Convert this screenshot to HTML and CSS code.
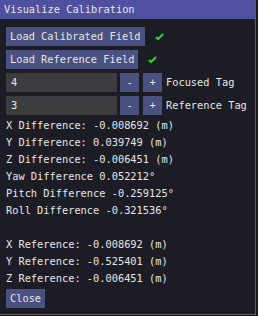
FILE: index.html
```html
<!DOCTYPE html>
<html lang="en">
<head>
    <meta charset="UTF-8">
    <meta name="viewport" content="width=device-width, initial-scale=1.0">
    <title>Visualize Calibration</title>
    <link rel="stylesheet" href="styles.css">
</head>
<body>
    <div class="window">
        <div class="title">Visualize Calibration</div>
        <div class="content">
            <div class="row">
                <button class="btn">Load Calibrated Field</button>
                <svg class="check" width="9" height="7" viewBox="0 0 9 7"><path d="M1 4 L3 6 L8 1" fill="none" stroke="#1ee21e" stroke-width="2"/></svg>
            </div>
            <div class="row">
                <button class="btn">Load Reference Field</button>
                <svg class="check" width="9" height="7" viewBox="0 0 9 7"><path d="M1 4 L3 6 L8 1" fill="none" stroke="#1ee21e" stroke-width="2"/></svg>
            </div>
            <div class="row">
                <div class="input">4</div>
                <button class="btn sq">-</button>
                <button class="btn sq">+</button>
                <span class="label">Focused Tag</span>
            </div>
            <div class="row">
                <div class="input">3</div>
                <button class="btn sq">-</button>
                <button class="btn sq">+</button>
                <span class="label">Reference Tag</span>
            </div>
            <div class="lines">
                <p>X Difference: -0.008692 (m)</p>
                <p>Y Difference: 0.039749 (m)</p>
                <p>Z Difference: -0.006451 (m)</p>
                <p>Yaw Difference 0.052212°</p>
                <p>Pitch Difference -0.259125°</p>
                <p>Roll Difference -0.321536°</p>
                <p>&nbsp;</p>
                <p>X Reference: -0.008692 (m)</p>
                <p>Y Reference: -0.525401 (m)</p>
                <p>Z Reference: -0.006451 (m)</p>
            </div>
            <div class="row">
                <button class="btn">Close</button>
            </div>
        </div>
    </div>
</body>
</html>
```

FILE: styles.css
```css
* {
    margin: 0;
    padding: 0;
    box-sizing: border-box;
}
body {
    width: 258px;
    height: 316px;
    background: #18181c;
    font: 10.33px/13px "DejaVu Sans Mono", monospace;
    color: #e6e6e6;
    overflow: hidden;
}
.window {
    width: 256px;
    height: 315px;
    background: #1c1c24;
    border: 1px solid #5c5c66;
    border-top: none;
    border-left: none;
}
.title {
    height: 19px;
    padding: 3px 4px;
    background: #5050a0;
}
.content {
    display: flex;
    flex-direction: column;
    gap: 4px;
    padding: 8px 6px;
}
.row {
    display: flex;
    align-items: center;
    gap: 4px;
    height: 19px;
}
.btn {
    height: 19px;
    padding: 3px 4px;
    border: none;
    background: #4a5080;
    color: #e6e6e6;
    font: inherit;
}
.sq {
    width: 19px;
    padding: 0;
    text-align: center;
}
.check {
    margin-left: 6px;
}
.input {
    width: 111px;
    height: 19px;
    padding: 3px 5px;
    background: #3c3c3e;
    margin-right: -1px;
}
.lines {
    margin-bottom: -4px;
}
.lines p {
    height: 17px;
    padding-bottom: 4px;
    white-space: pre;
}
```
